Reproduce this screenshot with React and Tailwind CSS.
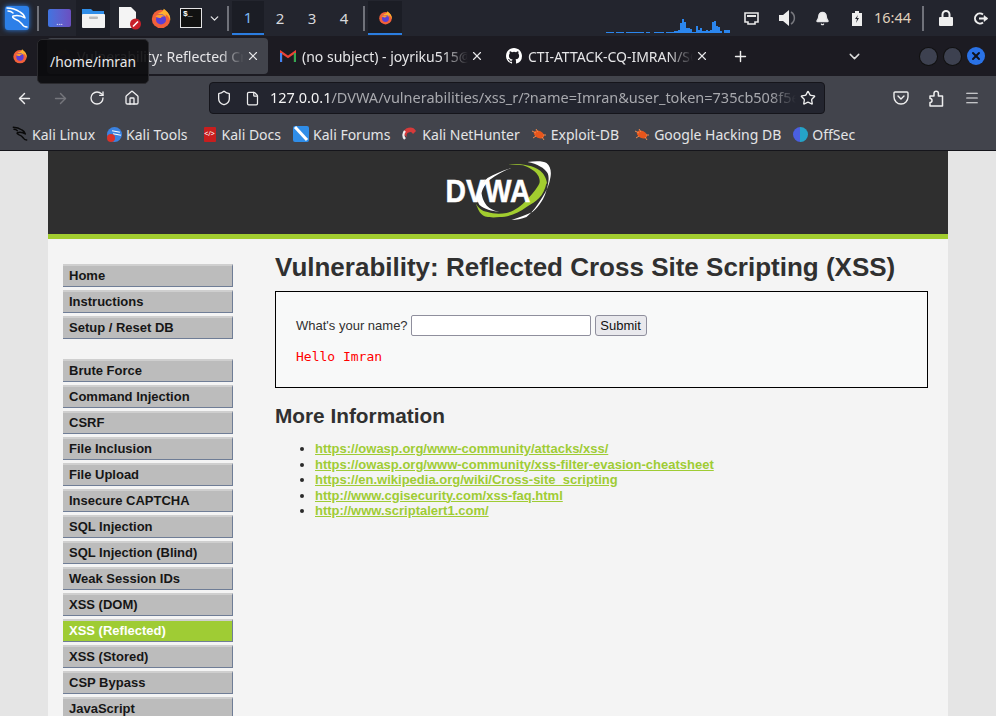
import { ArrowLeft, ArrowRight, RotateCw, Home, Shield, File, Star, Menu, Plus, ChevronDown, X, Bell } from "lucide-react";

const FIRST_MENU = ["Home", "Instructions", "Setup / Reset DB"];
const SECOND_MENU = [
  "Brute Force",
  "Command Injection",
  "CSRF",
  "File Inclusion",
  "File Upload",
  "Insecure CAPTCHA",
  "SQL Injection",
  "SQL Injection (Blind)",
  "Weak Session IDs",
  "XSS (DOM)",
  "XSS (Reflected)",
  "XSS (Stored)",
  "CSP Bypass",
  "JavaScript",
];
const LINKS = [
  "https://owasp.org/www-community/attacks/xss/",
  "https://owasp.org/www-community/xss-filter-evasion-cheatsheet",
  "https://en.wikipedia.org/wiki/Cross-site_scripting",
  "http://www.cgisecurity.com/xss-faq.html",
  "http://www.scriptalert1.com/",
];
// network graph, one bar every 2px
const GRAPH = [1,1,1,1,0,1,1,1,1,0,1,1,1,1,1,1,1,1,1,0,1,1,0,0,1,1,1,1,1,0,1,1,1,1,2,2,3,10,14,11,5,5,4,1,1,7,3,5,2,2,3,2,3,11,12,7,6,2,0,3,3,3];

function Firefox({ size = 18 }) {
  return (
    <svg width={size} height={size} viewBox="0 0 24 24">
      <circle cx="12" cy="13" r="10" fill="#f2603a" />
      <path d="M5 5c2 1 3 2 4 2 2-1 5-1 6-5 4 3 8 7 7 13-1-4-3-6-5-7 1 2 0 3-2 3z" fill="#ffb02e" />
      <circle cx="12" cy="13.5" r="5.5" fill="#5a3fd6" />
      <path d="M6 10c3-2 7-2 10 0-3 0-4 1-4 2-3 0-5-1-6-2z" fill="#ff9a2e" />
    </svg>
  );
}

function KaliDragon({ size = 24, color = "#fff", weight = 1.5 }) {
  return (
    <svg width={size} height={size} viewBox="0 0 24 24" fill="none" stroke={color} strokeWidth={weight} strokeLinecap="round" strokeLinejoin="round">
      <path d="M2 2c5 0 10 2 13 4 2 1 4 3 5 6-3-2-8-3-12-2-1 1 0 2 2 3 3 1 5 2 7 5 1 2 3 3 5 3" />
      <path d="M3 5c2 0 4 1 5 2" />
    </svg>
  );
}

function Bookmark({ icon, label, className }) {
  return (
    <div className={`flex items-center gap-[4px] ${className}`}>
      <span className="flex h-[16px] w-[16px] items-center justify-center">{icon}</span>
      <span className="text-[14px] text-[#e4e4e6]">{label}</span>
    </div>
  );
}

function Bug() {
  return (
    <svg width="16" height="16" viewBox="0 0 16 16">
      <ellipse cx="8" cy="8.5" rx="5.5" ry="3.5" fill="#e8561c" transform="rotate(25 8 8.5)" />
      <path d="M1 5l4 2M2 12l3-2M13 14l-2-3M15 9l-3 0M5 3l2 3" stroke="#f08a4c" strokeWidth="1" />
    </svg>
  );
}

function Tab({ icon, label, active, width }) {
  return (
    <div className={`flex h-[36px] items-center rounded pr-[8px] pl-[8px] ${active ? "bg-[#42444c]" : ""} ${width}`}>
      {icon}
      <span className="ml-[6px] flex-1 overflow-hidden text-[14px] whitespace-nowrap text-[#e6e6e8] [mask-image:linear-gradient(to_right,black_85%,transparent)]">
        {label}
      </span>
      <X size={14} className="ml-[2px] shrink-0 text-[#e6e6e8]" />
    </div>
  );
}

function TopPanel() {
  return (
    <div className="flex h-[36px] items-center bg-[#23252e] pl-[5px] text-[#e4e4e6]">
      <div className="flex h-[24px] w-[24px] items-center justify-center rounded-[3px] bg-[#2c7fe8] shadow-[0_0_5px_#2c7fe8]">
        <KaliDragon size={24} />
      </div>
      <div className="ml-[8px] h-[25px] w-[2px] bg-[#70727a]" />
      <div className="ml-[9px] flex h-[18px] w-[23px] items-end justify-center rounded-[2px] bg-gradient-to-r from-[#3f74e0] to-[#6a4fc0] pb-[1px] text-[8px] leading-[8px] text-white">
        ...
      </div>
      <div className="ml-[5px] flex h-[36px] w-[34px] items-center justify-center bg-[#1c1e26]">
        <svg width="23" height="21" viewBox="0 0 23 21">
          <path d="M0 1h9l2 2h11v6H0z" fill="#2f8de8" />
          <rect y="6" width="23" height="14" rx="1" fill="#f2f2f2" />
          <rect x="7" y="8.5" width="9" height="2.5" rx="1" fill="#bbb" />
        </svg>
      </div>
      <div className="ml-[8px] flex w-[24px] justify-center">
        <svg width="24" height="24" viewBox="0 0 24 24">
          <path d="M1 1h12l5 5v16H1z" fill="#f4f4f4" />
          <circle cx="17.5" cy="18" r="5.5" fill="#c8202a" />
          <path d="M15 20.5l5-5" stroke="#fff" strokeWidth="1.6" />
        </svg>
      </div>
      <div className="ml-[8px]">
        <Firefox size={22} />
      </div>
      <div className="ml-[8px] flex h-[20px] w-[22px] items-start border border-[#e4e4e6] bg-[#111] pl-[2px] font-['Liberation_Mono',monospace] text-[8px] leading-[10px] font-bold text-white">
        $_
      </div>
      <ChevronDown size={13} className="ml-[6px]" strokeWidth={2.4} />
      <div className="ml-[6px] h-[25px] w-[2px] bg-[#70727a]" />
      <div className="ml-[3px] flex h-[34px] w-[32px] items-center justify-center border-b-2 border-[#2b7de0] bg-[#1b1d25] text-[15px] text-[#7db8f0]">1</div>
      {["2", "3", "4"].map((n) => (
        <div key={n} className="flex h-[34px] w-[32px] items-center justify-center text-[15px] text-[#d8d8dc]">{n}</div>
      ))}
      <div className="ml-[3px] h-[25px] w-[2px] bg-[#70727a]" />
      <div className="ml-[3px] flex h-[34px] w-[34px] items-center justify-center border-b-2 border-[#2b7de0] bg-[#1b1d25]">
        <Firefox size={15} />
      </div>
      <div className="ml-[204px] flex h-[30px] w-[124px] shrink-0 items-end">
        {GRAPH.map((h, i) => (
          <div key={i} className="w-[2px] bg-[#2b86ee]" style={{ height: h }} />
        ))}
      </div>
      <svg className="ml-[14px]" width="15" height="13" viewBox="0 0 15 13">
        <path d="M1 1h13v9h-3v2H4v-2H1z" fill="none" stroke="#e8e8e8" strokeWidth="1.6" />
        <path d="M3 3h9v2H3z" fill="#e8e8e8" />
      </svg>
      <svg className="ml-[20px]" width="18" height="16" viewBox="0 0 18 16">
        <path d="M0 5h4l6-5v16l-6-5H0z" fill="#eee" />
        <path d="M12 2a7 7 0 010 12" fill="none" stroke="#77787e" strokeWidth="1.5" />
      </svg>
      <Bell size={15} className="ml-[18px]" fill="#eee" />
      <svg className="ml-[22px]" width="10" height="15" viewBox="0 0 10 15">
        <path d="M3 0h4v2h3v13H0V2h3z" fill="#eee" />
        <path d="M6 4L3 8h2l-1 4 3-5H5z" fill="#23252e" />
      </svg>
      <span className="ml-[12px] text-[14.5px] text-[#e0d2bc]">16:44</span>
      <div className="ml-[11px] h-[25px] w-[2px] bg-[#70727a]" />
      <svg className="ml-[15px]" width="14" height="16" viewBox="0 0 14 16">
        <path d="M3.5 7V4.5a3.5 3.5 0 017 0V7" fill="none" stroke="#eee" strokeWidth="2" />
        <rect y="7" width="14" height="9" rx="1" fill="#eee" />
      </svg>
      <svg className="ml-[20px]" width="16" height="13" viewBox="0 0 16 13" fill="none" stroke="#eee" strokeWidth="2">
        <path d="M10 2.5a5 5 0 100 8" />
        <path d="M6 6.5h8" />
        <path d="M11 3.5l4 3-4 3z" fill="#eee" strokeWidth="0.5" />
      </svg>
    </div>
  );
}

function TabBar() {
  return (
    <div className="flex h-[40px] items-center bg-[#1c1b22] pl-[4px]">
      <div className="flex w-[32px] justify-center">
        <Firefox size={16} />
      </div>
      <div className="ml-[11px]">
        <Tab active width="w-[221px]" icon={<span className="flex shrink-0 opacity-30"><Firefox size={16} /></span>} label="Vulnerability: Reflected Cross" />
      </div>
      <div className="ml-[4px]">
        <Tab
          width="w-[220px]"
          icon={
            <svg width="16" height="13" viewBox="0 0 16 13" className="shrink-0">
              <path d="M1 12V2l7 5 7-5v10" fill="none" stroke="#ea4335" strokeWidth="2.2" />
              <path d="M1 12V3" stroke="#4285f4" strokeWidth="2.2" />
              <path d="M15 12V3" stroke="#34a853" strokeWidth="2.2" />
            </svg>
          }
          label="(no subject) - joyriku515@gmail"
        />
      </div>
      <div className="ml-[6px]">
        <Tab
          width="w-[219px]"
          icon={
            <svg width="16" height="16" viewBox="0 0 16 16" className="shrink-0" fill="#fff">
              <path d="M8 0C3.58 0 0 3.58 0 8c0 3.54 2.29 6.53 5.47 7.59.4.07.55-.17.55-.38v-1.49c-2.01.37-2.53-.49-2.69-.94-.09-.23-.48-.94-.82-1.13-.28-.15-.68-.52-.01-.53.63-.01 1.08.58 1.23.82.72 1.21 1.87.87 2.33.66.07-.52.28-.87.51-1.07-1.78-.2-3.64-.89-3.64-3.95 0-.87.31-1.59.82-2.15-.08-.2-.36-1.02.08-2.12 0 0 .67-.21 2.2.82a7.5 7.5 0 014 0c1.53-1.04 2.2-.82 2.2-.82.44 1.1.16 1.92.08 2.12.51.56.82 1.27.82 2.15 0 3.07-1.87 3.75-3.65 3.95.29.25.54.73.54 1.48v2.2c0 .21.15.46.55.38A8 8 0 0016 8c0-4.42-3.58-8-8-8z" />
            </svg>
          }
          label="CTI-ATTACK-CQ-IMRAN/SOC"
        />
      </div>
      <Plus size={17} className="ml-[15px] text-[#eee]" />
      <ChevronDown size={17} className="ml-[97px] text-[#ddd]" />
      <div className="ml-[57px] h-[17px] w-[17px] rounded-full bg-[#3d4150] ring-1 ring-[#111]" />
      <div className="ml-[7px] h-[17px] w-[17px] rounded-full bg-[#3d4150] ring-1 ring-[#111]" />
      <div className="ml-[6px] flex h-[18px] w-[18px] items-center justify-center rounded-full bg-[#2a72e6]">
        <X size={12} strokeWidth={4} className="text-[#10131c]" />
      </div>
    </div>
  );
}

function NavBar() {
  return (
    <div className="flex h-[44px] items-center bg-[#42444c] pl-[16px] text-[#eeeeef]">
      <ArrowLeft size={17} />
      <ArrowRight size={17} className="ml-[19px] text-[#75767c]" />
      <RotateCw size={16} className="ml-[20px]" />
      <Home size={16} className="ml-[19px]" />
      <div className="ml-[69px] flex h-[32px] w-[616px] items-center rounded-[4px] border border-[#15151b] bg-[#23252f] pl-[6px]">
        <Shield size={16} />
        <File size={15} className="ml-[13px]" />
        <div className="ml-[10px] w-[526px] overflow-hidden text-[14.5px] whitespace-nowrap [mask-image:linear-gradient(to_right,black_95%,transparent)]">
          <span className="text-[#f4f4f4]">127.0.0.1</span>
          <span className="text-[#a8a9ae]">/DVWA/vulnerabilities/xss_r/?name=Imran&amp;user_token=735cb508f5e1</span>
        </div>
        <Star size={16} className="ml-[4px]" />
      </div>
      <svg className="ml-[68px]" width="16" height="16" viewBox="0 0 16 16" fill="none" stroke="#eee" strokeWidth="1.4">
        <path d="M2 2h12a1 1 0 011 1v4a7 7 0 01-14 0V3a1 1 0 011-1z" />
        <path d="M5 6l3 3 3-3" strokeLinecap="round" />
      </svg>
      <svg className="ml-[20px]" width="15" height="17" viewBox="0 0 15 17" fill="none" stroke="#eee" strokeWidth="1.5" strokeLinejoin="round">
        <path d="M1 6h4V3.5a2.2 2.2 0 014.4 0V6h4.1v10H1v-3.5a2 2 0 000-4z" />
      </svg>
      <Menu size={16} strokeWidth={1.6} className="ml-[20px]" />
    </div>
  );
}

function BookmarkBar() {
  return (
    <div className="flex h-[31px] items-center border-b border-[#15151b] bg-[#42444c] pb-[2px] pl-[12px]">
      <Bookmark icon={<KaliDragon size={16} color="#0a0a0a" weight={2.2} />} label="Kali Linux" />
      <Bookmark
        className="ml-[11px]"
        icon={
          <span className="relative block h-[15px] w-[15px] rounded-full bg-[#3b82e0]">
            <span className="absolute top-[4px] left-[5px] h-[1px] w-[8px] rotate-12 bg-white" />
            <span className="absolute top-[7px] left-[6px] h-[1px] w-[8px] rotate-12 bg-white" />
            <span className="absolute bottom-0 left-0 h-[8px] w-[8px] rounded-full bg-[#d8322a]" />
          </span>
        }
        label="Kali Tools"
      />
      <Bookmark
        className="ml-[14px]"
        icon={<span className="block h-[15px] w-[12px] rounded-[1px] bg-[#c81e1e] text-center text-[7px] leading-[14px] text-white">&lt;/&gt;</span>}
        label="Kali Docs"
      />
      <Bookmark
        className="ml-[12px]"
        icon={
          <svg width="16" height="16" viewBox="0 0 16 16">
            <rect width="16" height="16" rx="2" fill="#2f8de8" />
            <path d="M2 1l12 13" stroke="#fff" strokeWidth="3" />
          </svg>
        }
        label="Kali Forums"
      />
      <Bookmark
        className="ml-[12px]"
        icon={
          <svg width="16" height="16" viewBox="0 0 16 16" fill="none">
            <path d="M1 8a7 7 0 0113-3l-3 3a3 3 0 00-6 3z" fill="#d63a3a" />
            <path d="M3 13a6 6 0 010-8" stroke="#eee" strokeWidth="2.4" />
          </svg>
        }
        label="Kali NetHunter"
      />
      <Bookmark className="ml-[11px]" icon={<Bug />} label="Exploit-DB" />
      <Bookmark className="ml-[15px]" icon={<Bug />} label="Google Hacking DB" />
      <Bookmark
        className="ml-[11px]"
        icon={
          <span className="flex h-[15px] w-[15px] overflow-hidden rounded-full">
            <span className="w-1/2 bg-[#4a5fe0]" />
            <span className="w-1/2 bg-[#25a3c8]" />
          </span>
        }
        label="OffSec"
      />
    </div>
  );
}

function MenuItem({ label, selected }) {
  return (
    <div
      className={`mb-[3px] flex h-[23px] items-center border-t-2 border-r border-b border-t-[#cfcfcf] border-r-[#6f7d96] border-b-[#6f7d96] pl-[6px] text-[13px] font-bold ${
        selected ? "bg-[#9fcc34] text-white" : "bg-[#bcbcbc] text-[#161616]"
      }`}
    >
      {label}
    </div>
  );
}

function DvwaLogo() {
  return (
    <svg width="106" height="62" viewBox="-0.5 0 106 62">
      {/* green crescent */}
      <path d="M62 4C74 2 90 4 97 12c5 6 5 14 4 10-3 14-10 18-20 24-8 6-18 10-27 10-8 1-15 0-17-2-4-3-5-8-7-12 3 5 6 8 12 9 6 2 13 2 19 1 8-2 15-7 20-13 5-5 11-12 13-17 1-5-2-10-7-13-4-3-8-5-13-5z" fill="#a2cd2f" />
      {/* white outer swoosh */}
      <path d="M82 1c8-1 16-1 19 1 4 3 5 9 4 14-1 7-4 14-8 20-5 8-10 15-16 20-5 2-10 3-15 3 8-3 15-5 21-8 7-6 12-14 14-22 2-6 3-13 1-17-3-5-10-9-20-11z" fill="#fff" />
      {/* white inner swoosh */}
      <path d="M66 7c-8 2-17 6-24 10-5 5-9 10-10 15-1 5 0 9 2 12 5 4 12 6 20 7-4-1-7-2-10-4-4-3-7-8-8-15 1-5 4-9 8-13 7-5 14-9 22-12z" fill="#fff" />
      <text x="0" y="41" fontFamily="Liberation Sans, sans-serif" fontSize="32" fontWeight="700" fill="#fff" stroke="#fff" strokeWidth="0.5" textLength="85" lengthAdjust="spacingAndGlyphs">DVWA</text>
    </svg>
  );
}

function DvwaPage() {
  return (
    <div className="mx-[48px] min-h-[565px] bg-[#f4f4f4] font-['Liberation_Sans',Arial,sans-serif] text-[13px] text-[#303030]">
      <div className="flex h-[88px] justify-center border-b-[5px] border-[#a2cd2f] bg-[#2f2f2f] pt-[10px]">
        <DvwaLogo />
      </div>
      <div className="flex pt-[25px] pr-[20px] pl-[15px]">
        <div className="w-[170px] shrink-0">
          {FIRST_MENU.map((m) => (
            <MenuItem key={m} label={m} />
          ))}
          <div className="h-[17px]" />
          {SECOND_MENU.map((m) => (
            <MenuItem key={m} label={m} selected={m === "XSS (Reflected)"} />
          ))}
        </div>
        <div className="ml-[42px] flex-1">
          <h1 className="-mt-[12px] text-[26px] leading-[30px] font-bold">Vulnerability: Reflected Cross Site Scripting (XSS)</h1>
          <div className="mt-[9px] h-[97px] border border-black bg-[#f8f9f9] pt-[23px] pl-[20px]">
            <div className="flex items-center">
              <span>What's your name?</span>
              <input className="ml-[3px] h-[21px] w-[180px] rounded-[2px] border border-[#8f8f9d] bg-white" />
              <button className="ml-[4px] h-[21px] w-[52px] rounded-[3px] border border-[#8f8f9d] bg-[#e9e9ed] text-[13px] text-[#111]">Submit</button>
            </div>
            <pre className="mt-[13px] font-['DejaVu_Sans_Mono','Liberation_Mono',monospace] text-[13px] leading-[15px] text-[#ff0000]">Hello Imran</pre>
          </div>
          <h2 className="mt-[16px] text-[20.8px] leading-[24px] font-bold">More Information</h2>
          <ul className="mt-[13px] list-disc pl-[40px] text-[13px] leading-[15.5px] font-bold marker:text-[#2a2a2a]">
            {LINKS.map((l) => (
              <li key={l}>
                <a className="text-[#9fcc34] underline">{l}</a>
              </li>
            ))}
          </ul>
        </div>
      </div>
    </div>
  );
}

export default function App() {
  return (
    <div className="relative h-[716px] w-[996px] overflow-hidden bg-[#e5e5e5] font-['Noto_Sans',sans-serif]">
      <TopPanel />
      <TabBar />
      <NavBar />
      <BookmarkBar />
      <DvwaPage />
      {/* panel tooltip sits over the tab strip */}
      <div className="absolute top-[39px] left-[37px] flex h-[45px] w-[112px] items-center justify-center rounded-[5px] border border-[#2a2a2e] bg-[#0b0b0d]/90 pt-[1px] text-[13.8px] text-[#e8e8ea]">
        /home/imran
      </div>
    </div>
  );
}
